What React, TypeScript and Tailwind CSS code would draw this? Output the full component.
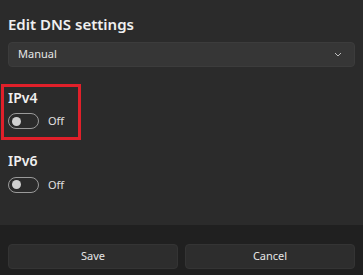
import React from "react";

function Toggle() {
  return (
    <div className="flex items-center gap-[9px]">
      <div className="w-[31px] h-[16px] rounded-full border border-[#9a9a9a] flex items-center pl-[3px]">
        <div className="w-[9px] h-[9px] rounded-full bg-[#d0d0d0]" />
      </div>
      <span className="text-[11px] text-[#e0e0e0]">Off</span>
    </div>
  );
}

export default function App() {
  return (
    <div
      className="w-[363px] h-[275px] flex flex-col bg-[#2b2b2b] overflow-hidden"
      style={{ fontFamily: '"Noto Sans", "Open Sans", sans-serif' }}
    >
      <div className="flex-1 flex flex-col px-[8px]">
        <div className="mt-[13px] text-[15px] font-semibold text-[#f0f0f0] leading-[22px]">
          Edit DNS settings
        </div>
        <div className="mt-[7px] h-[25px] rounded-[4px] bg-[#363636] border border-[#3c3c3c] flex items-center justify-between pl-[9px] pr-[12px]">
          <span className="text-[11px] text-[#e6e6e6]">Manual</span>
          <svg width="8" height="5" viewBox="0 0 8 5" fill="none">
            <path d="M1 1l3 3 3-3" stroke="#bdbdbd" strokeWidth="1" />
          </svg>
        </div>
        <div className="relative mt-[17px]">
          <div className="absolute left-[-7px] top-0 w-[80px] h-[56px] border-[3px] border-[#e0202a]" />
          <div className="pt-[4px] text-[14px] font-semibold text-[#f0f0f0] leading-[20px]">IPv4</div>
          <div className="mt-[5px]">
            <Toggle />
          </div>
        </div>
        <div className="mt-[21px] text-[14px] font-semibold text-[#f0f0f0] leading-[20px]">IPv6</div>
        <div className="mt-[6px]">
          <Toggle />
        </div>
      </div>
      <div className="h-[50px] bg-[#202020] flex items-start gap-[7px] px-[8px] pt-[19px]">
        <button className="flex-1 h-[25px] rounded-[4px] bg-[#2d2d2d] border border-[#343434] text-[11px] text-[#e6e6e6]">
          Save
        </button>
        <button className="flex-1 h-[25px] rounded-[4px] bg-[#2d2d2d] border border-[#343434] text-[11px] text-[#e6e6e6]">
          Cancel
        </button>
      </div>
    </div>
  );
}
